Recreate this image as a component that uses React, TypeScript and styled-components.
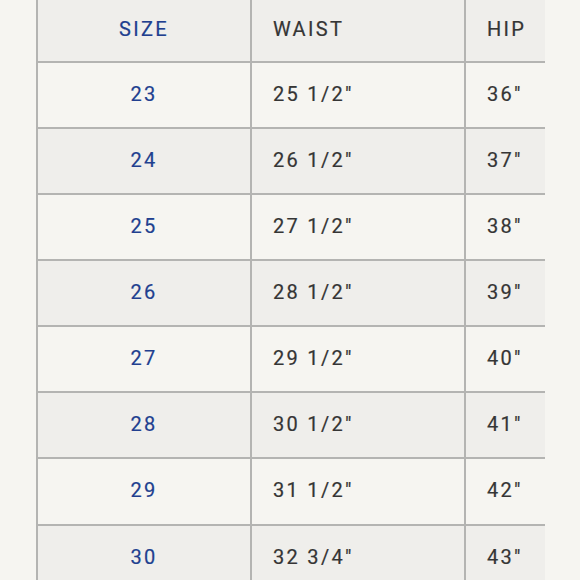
import React from 'react';
import styled, { createGlobalStyle } from 'styled-components';

const GlobalStyle = createGlobalStyle`
  html, body {
    margin: 0;
    padding: 0;
    background: #f6f5f1;
    overflow: hidden;
  }
`;

const StyledPage = styled.div`
  width: 580px;
  height: 580px;
  overflow: hidden;
  padding-left: 36px;
  box-sizing: border-box;
  font-family: Roboto, 'Liberation Sans', sans-serif;
`;

const StyledTable = styled.div`
  display: flex;
  flex-direction: column;
  width: 509px;
`;

const StyledRow = styled.div<{ $shaded: boolean; $height: number }>`
  display: grid;
  grid-template-columns: 214px 214px 81px;
  height: ${({ $height }) => $height}px;
  background: ${({ $shaded }) => ($shaded ? '#efeeeb' : '#f6f5f1')};
  border-bottom: 2px solid #b4b4b2;
  box-sizing: border-box;
`;

const StyledCell = styled.div<{ $align: 'center' | 'left'; $blue?: boolean }>`
  display: flex;
  align-items: center;
  justify-content: ${({ $align }) => ($align === 'center' ? 'center' : 'flex-start')};
  padding-left: ${({ $align }) => ($align === 'center' ? '0' : '21px')};
  padding-bottom: 3px;
  border-left: 2px solid #b4b4b2;
  font-size: 20px;
  letter-spacing: 2.3px;
  color: ${({ $blue }) => ($blue ? '#213f8f' : '#353535')};
  -webkit-text-stroke: 0.2px currentColor;
  white-space: nowrap;
  overflow: hidden;
`;

const rows = [
  { size: '23', waist: '25 1/2\u2033', hip: '36\u2033' },
  { size: '24', waist: '26 1/2\u2033', hip: '37\u2033' },
  { size: '25', waist: '27 1/2\u2033', hip: '38\u2033' },
  { size: '26', waist: '28 1/2\u2033', hip: '39\u2033' },
  { size: '27', waist: '29 1/2\u2033', hip: '40\u2033' },
  { size: '28', waist: '30 1/2\u2033', hip: '41\u2033' },
  { size: '29', waist: '31 1/2\u2033', hip: '42\u2033' },
  { size: '30', waist: '32 3/4\u2033', hip: '43\u2033' }
];

// row heights measured off the reference grid lines
const rowHeight = (i: number) => (i === 6 ? 67 : 66);

const App: React.FC = () => (
  <>
    <GlobalStyle />
    <StyledPage>
      <StyledTable>
        <StyledRow $shaded $height={63}>
          <StyledCell $align="center" $blue>SIZE</StyledCell>
          <StyledCell $align="left">WAIST</StyledCell>
          <StyledCell $align="left">HIP</StyledCell>
        </StyledRow>
        {rows.map((row, i) => (
          <StyledRow key={row.size} $shaded={i % 2 === 1} $height={rowHeight(i)}>
            <StyledCell $align="center" $blue>{row.size}</StyledCell>
            <StyledCell $align="left">{row.waist}</StyledCell>
            <StyledCell $align="left">{row.hip}</StyledCell>
          </StyledRow>
        ))}
      </StyledTable>
    </StyledPage>
  </>
);

export default App;
